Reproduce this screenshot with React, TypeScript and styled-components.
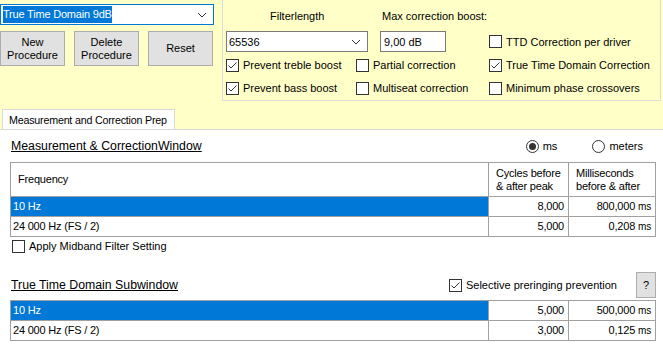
import React, { FC } from 'react'
import styled, { createGlobalStyle } from 'styled-components'

const GlobalStyle = createGlobalStyle`
	body {
		margin: 0;
		background: #ffffc8;
		font-family: 'Liberation Sans', Arial, sans-serif;
		font-size: 11px;
		color: #000;
	}
`

const Page = styled.div`
	width: 663px;
	height: 348px;
	display: flex;
	flex-direction: column;
	overflow: hidden;
`

const TopArea = styled.div`
	display: flex;
	height: 109px;
	flex-shrink: 0;
`

const LeftCol = styled.div`
	width: 222px;
	padding-top: 4px;
	display: flex;
	flex-direction: column;
	gap: 6px;
`

const Combo = styled.div<{ $w: number; $focus?: boolean }>`
	width: ${p => p.$w}px;
	height: 21px;
	box-sizing: border-box;
	border: 1px solid ${p => (p.$focus ? '#0078d7' : '#7a7a7a')};
	background: #fff;
	display: flex;
	align-items: center;
	padding: 0 2px;
	justify-content: space-between;
`

const Selected = styled.span`
	background: #0078d7;
	color: #fff;
	padding: 1px 0;
	line-height: 15px;
	letter-spacing: -0.2px;
`

const Chevron: FC = () => (
	<svg width='17' height='8' viewBox='0 0 17 8'>
		<polyline points='4,2 8,6 12,2' fill='none' stroke='#333' strokeWidth='1' />
	</svg>
)

const ButtonRow = styled.div`
	display: flex;
	gap: 9px;
`

const Button = styled.div<{ $w: number; $h: number }>`
	width: ${p => p.$w}px;
	height: ${p => p.$h}px;
	box-sizing: border-box;
	background: #e1e1e1;
	border: 1px solid #adadad;
	display: flex;
	align-items: center;
	justify-content: center;
	text-align: center;
	line-height: 13px;
	flex-shrink: 0;
`

const GroupBox = styled.div`
	width: 439px;
	height: 101px;
	box-sizing: border-box;
	border: 1px solid #dcdcdc;
	border-top: none;
	padding-left: 3px;
	display: flex;
	flex-direction: column;
`

const Row = styled.div<{ $mt: number; $h: number }>`
	display: flex;
	align-items: center;
	margin-top: ${p => p.$mt}px;
	height: ${p => p.$h}px;
`

const Cell = styled.div<{ $w?: number }>`
	${p => (p.$w ? `width: ${p.$w}px;` : 'flex: 1;')}
	flex-shrink: 0;
	display: flex;
	align-items: center;
`

const Label = styled.span<{ $pl?: number }>`
	padding-left: ${p => p.$pl || 0}px;
	white-space: nowrap;
`

const TextBox = styled.div`
	width: 66px;
	height: 21px;
	box-sizing: border-box;
	border: 1px solid #7a7a7a;
	background: #fff;
	padding: 0 3px;
	display: flex;
	align-items: center;
`

const CheckWrap = styled.label`
	display: flex;
	align-items: center;
	gap: 4px;
	white-space: nowrap;
`

const Box = styled.span`
	width: 13px;
	height: 13px;
	box-sizing: border-box;
	border: 1px solid #333;
	background: #fff;
	display: flex;
	align-items: center;
	justify-content: center;
	flex-shrink: 0;
`

const Check: FC<{ checked?: boolean; label: string }> = ({ checked, label }) => (
	<CheckWrap>
		<Box>
			{checked && (
				<svg width='11' height='11' viewBox='0 0 11 11'>
					<polyline points='1.5,5.5 4,8 9.5,2.5' fill='none' stroke='#333' strokeWidth='1' />
				</svg>
			)}
		</Box>
		{label}
	</CheckWrap>
)

const RadioCircle = styled.span`
	width: 13px;
	height: 13px;
	box-sizing: border-box;
	border: 1px solid #333;
	border-radius: 50%;
	background: #fff;
	display: flex;
	align-items: center;
	justify-content: center;
`

const Dot = styled.span`
	width: 7px;
	height: 7px;
	border-radius: 50%;
	background: #333;
`

const Radio: FC<{ checked?: boolean; label: string }> = ({ checked, label }) => (
	<CheckWrap>
		<RadioCircle>{checked && <Dot />}</RadioCircle>
		{label}
	</CheckWrap>
)

const TabStrip = styled.div`
	height: 20px;
	display: flex;
	align-items: flex-end;
	padding-left: 2px;
	flex-shrink: 0;
`

const Tab = styled.div`
	width: 173px;
	height: 20px;
	box-sizing: border-box;
	background: #fff;
	border: 1px solid #d9d9d9;
	border-bottom: none;
	padding-left: 6px;
	font-size: 10.7px;
	letter-spacing: -0.2px;
	white-space: nowrap;
	display: flex;
	align-items: center;
`

const Panel = styled.div`
	flex: 1;
	background: #fff;
	border-top: 1px solid #d9d9d9;
	padding-left: 10px;
	display: flex;
	flex-direction: column;
`

const SectionRow = styled.div<{ $mt: number; $h: number }>`
	display: flex;
	align-items: center;
	height: ${p => p.$h}px;
	margin-top: ${p => p.$mt}px;
	width: 646px;
`

const Title = styled.span`
	padding-left: 1px;
	font-size: 12.3px;
	text-decoration: underline;
	flex: 1;
`

const Table = styled.div<{ $mt: number }>`
	width: 646px;
	box-sizing: border-box;
	border: 1px solid #a0a0a0;
	margin-top: ${p => p.$mt}px;
	display: grid;
	grid-template-columns: 478px 80px 1fr;
	letter-spacing: -0.2px;
`

const Td = styled.div<{ $sel?: boolean; $right?: boolean; $head?: boolean; $last?: boolean }>`
	height: ${p => (p.$head ? 33 : 19)}px;
	border-bottom: ${p => (p.$last ? 'none' : '1px solid #a0a0a0')};
	border-right: 1px solid #a0a0a0;
	&:nth-child(3n) {
		border-right: none;
	}
	background: ${p => (p.$sel ? '#0078d7' : '#fff')};
	color: ${p => (p.$sel ? '#fff' : '#000')};
	display: flex;
	flex-direction: column;
	justify-content: center;
	align-items: ${p => (p.$right ? 'flex-end' : 'flex-start')};
	padding: ${p => (p.$head ? '0 6px 0 7px' : '0 4px 0 2px')};
	line-height: 13px;
	white-space: nowrap;
`

const Unit = styled.span`
	font-size: 10px;
	margin-left: 3px;
`

const Ms: FC<{ v: string }> = ({ v }) => (
	<span>
		{v}
		<Unit>ms</Unit>
	</span>
)

const Spacer = styled.div<{ $w: number }>`
	width: ${p => p.$w}px;
	flex-shrink: 0;
`

const App: FC = () => {
	return (
		<Page>
			<GlobalStyle />
			<TopArea>
				<LeftCol>
					<Combo $w={214} $focus>
						<Selected>True Time Domain 9dB</Selected>
						<Chevron />
					</Combo>
					<ButtonRow>
						<Button $w={65} $h={35}>New<br />Procedure</Button>
						<Button $w={65} $h={35}>Delete<br />Procedure</Button>
						<Button $w={65} $h={35}>Reset</Button>
					</ButtonRow>
				</LeftCol>
				<GroupBox>
					<Row $mt={9} $h={14}>
						<Cell $w={156}><Label $pl={44}>Filterlength</Label></Cell>
						<Cell><Label>Max correction boost:</Label></Cell>
					</Row>
					<Row $mt={8} $h={21}>
						<Combo $w={142}>
							<span>65536</span>
							<Chevron />
						</Combo>
						<Spacer $w={12} />
						<TextBox>9,00 dB</TextBox>
						<Spacer $w={43} />
						<Check label='TTD Correction per driver' />
					</Row>
					<Row $mt={6} $h={14}>
						<Cell $w={130}><Check checked label='Prevent treble boost' /></Cell>
						<Cell $w={133}><Check label='Partial correction' /></Cell>
						<Cell><Check checked label='True Time Domain Correction' /></Cell>
					</Row>
					<Row $mt={9} $h={14}>
						<Cell $w={130}><Check checked label='Prevent bass boost' /></Cell>
						<Cell $w={133}><Check label='Multiseat correction' /></Cell>
						<Cell><Check label='Minimum phase crossovers' /></Cell>
					</Row>
				</GroupBox>
			</TopArea>
			<TabStrip>
				<Tab>Measurement and Correction Prep</Tab>
			</TabStrip>
			<Panel>
				<SectionRow $mt={8} $h={16}>
					<Title>Measurement &amp; CorrectionWindow</Title>
					<Radio checked label='ms' />
					<Spacer $w={35} />
					<Radio label='meters' />
					<Spacer $w={13} />
				</SectionRow>
				<Table $mt={8}>
					<Td $head>Frequency</Td>
					<Td $head><span>Cycles before</span><span>&amp; after peak</span></Td>
					<Td $head><span>Milliseconds</span><span>before &amp; after</span></Td>
					<Td $sel>10 Hz</Td>
					<Td $right>8,000</Td>
					<Td $right><Ms v='800,000' /></Td>
					<Td $last>24 000 Hz (FS / 2)</Td>
					<Td $last $right>5,000</Td>
					<Td $last $right><Ms v='0,208' /></Td>
				</Table>
				<SectionRow $mt={2} $h={14}>
					<Spacer $w={2} />
					<Check label='Apply Midband Filter Setting' />
				</SectionRow>
				<SectionRow $mt={19} $h={26}>
					<Title>True Time Domain Subwindow</Title>
					<Check checked label='Selective preringing prevention' />
					<Spacer $w={19} />
					<Button $w={20} $h={26}>?</Button>
				</SectionRow>
				<Table $mt={2}>
					<Td $sel>10 Hz</Td>
					<Td $right>5,000</Td>
					<Td $right><Ms v='500,000' /></Td>
					<Td $last>24 000 Hz (FS / 2)</Td>
					<Td $last $right>3,000</Td>
					<Td $last $right><Ms v='0,125' /></Td>
				</Table>
			</Panel>
		</Page>
	)
}

export default App
